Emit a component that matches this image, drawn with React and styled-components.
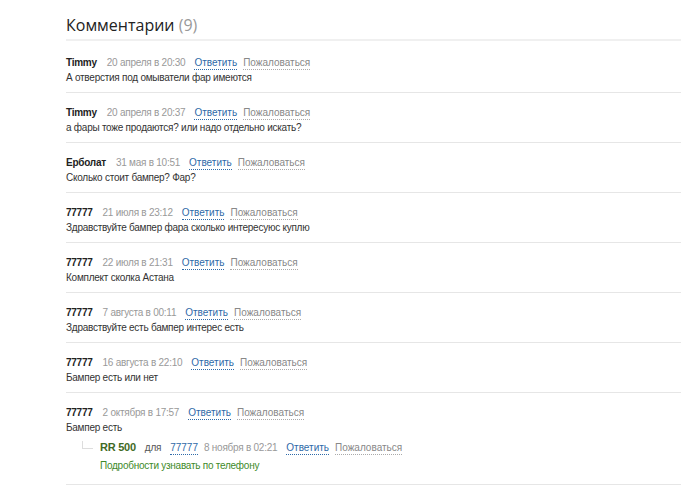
import React from "react";
import styled, { createGlobalStyle } from "styled-components";

const GlobalStyle = createGlobalStyle`
  body {
    margin: 0;
    background: #fff;
    font-family: "Liberation Sans", Arial, sans-serif;
  }
`;

const comments = [
  { author: "Timmy", date: "20 апреля в 20:30", text: "А отверстия под омыватели фар имеются" },
  { author: "Timmy", date: "20 апреля в 20:37", text: "а фары тоже продаются? или надо отдельно искать?" },
  { author: "Ерболат", date: "31 мая в 10:51", text: "Сколько стоит бампер? Фар?" },
  { author: "77777", date: "21 июля в 23:12", text: "Здравствуйте бампер фара сколько интересуюс куплю" },
  { author: "77777", date: "22 июля в 21:31", text: "Комплект сколка Астана" },
  { author: "77777", date: "7 августа в 00:11", text: "Здравствуйте есть бампер интерес есть" },
  { author: "77777", date: "16 августа в 22:10", text: "Бампер есть или нет" },
  {
    author: "77777",
    date: "2 октября в 17:57",
    text: "Бампер есть",
    reply: {
      author: "RR 500",
      to: "77777",
      date: "8 ноября в 02:21",
      text: "Подробности узнавать по телефону",
    },
  },
];

export default function App() {
  return (
    <>
      <GlobalStyle />
      <Wrapper>
        <Title>
          Комментарии <Count>(9)</Count>
        </Title>
        <List>
          {comments.map((c, i) => (
            <Comment key={i}>
              <Meta>
                <Author>{c.author}</Author>
                <DateText>{c.date}</DateText>
                <Action>Ответить</Action>
                <Action $muted>Пожаловаться</Action>
              </Meta>
              <Body>{c.text}</Body>
              {c.reply && (
                <Reply>
                  <Meta>
                    <Author $green>{c.reply.author}</Author>
                    <For>для</For>
                    <Action>{c.reply.to}</Action>
                    <DateText>{c.reply.date}</DateText>
                    <Action>Ответить</Action>
                    <Action $muted>Пожаловаться</Action>
                  </Meta>
                  <Body $green>{c.reply.text}</Body>
                </Reply>
              )}
            </Comment>
          ))}
        </List>
      </Wrapper>
    </>
  );
}

const Wrapper = styled.div`
  width: 615px;
  padding: 15px 0 0 66px;
`;

const Title = styled.h2`
  margin: 0;
  padding-bottom: 4px;
  font-family: "Open Sans", "Liberation Sans", sans-serif;
  font-size: 16px;
  font-weight: 400;
  line-height: 20px;
  color: #222;
  border-bottom: 2px solid #f0f0f0;
`;

const Count = styled.span`
  color: #999;
`;

const List = styled.div`
  display: flex;
  flex-direction: column;
`;

const Comment = styled.div`
  padding: 12px 0 6px;
  border-bottom: 1px solid #e6e6e6;
  &:first-child {
    padding-top: 14px;
  }
  &:last-child {
    padding-bottom: 10px;
  }
`;

const Meta = styled.div`
  display: flex;
  align-items: baseline;
  height: 15px;
  line-height: 15px;
  font-size: 10px;
  letter-spacing: -0.25px;
`;

const Author = styled.b`
  color: ${(p) => (p.$green ? "#3f6a25" : "#222")};
  font-size: ${(p) => (p.$green ? "11px" : "10px")};
  margin-right: ${(p) => (p.$green ? "9px" : "10px")};
`;

const DateText = styled.span`
  color: #999;
  margin-right: 9px;
`;

const For = styled.span`
  color: #555;
  margin-right: 9px;
`;

const Action = styled.a`
  color: ${(p) => (p.$muted ? "#888" : "#2f6aa8")};
  border-bottom: 1px dotted ${(p) => (p.$muted ? "#aaa" : "#2f6aa8")};
  letter-spacing: 0;
  line-height: 12px;
  margin-right: 6px;
  cursor: pointer;
`;

const Body = styled.div`
  font-size: 10px;
  letter-spacing: -0.25px;
  line-height: 16px;
  color: ${(p) => (p.$green ? "#3e8a2a" : "#333")};
  margin-top: ${(p) => (p.$green ? "3px" : "0")};
`;

const Reply = styled.div`
  position: relative;
  margin-top: 4px;
  padding-left: 34px;
  &::before {
    content: "";
    position: absolute;
    left: 16px;
    top: 1px;
    width: 10px;
    height: 7px;
    border-left: 1px solid #ddd;
    border-bottom: 1px solid #ddd;
  }
`;
